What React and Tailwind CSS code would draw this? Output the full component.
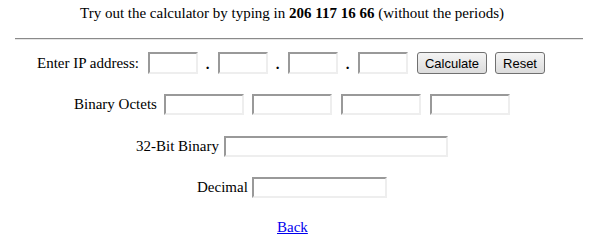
const inputCls =
  'bg-white border-2 border-t-[#999999] border-l-[#999999] border-b-[#eeeeee] border-r-[#eeeeee] outline-none';

const btnCls =
  'h-[22px] text-[13px] text-black rounded-[3px] border border-[#707070] bg-gradient-to-b from-[#f4f4f4] to-[#dcdcdc] leading-none font-["Liberation_Sans",sans-serif]';

const Dot = () => (
  <span className="w-[20px] self-end text-center font-bold text-[15px] leading-none relative -top-[2px] pr-[1px]">.</span>
);

const App = () => {
  return (
    <div className="w-[602px] h-[251px] bg-white text-black font-['Liberation_Serif',serif] text-[15px]">
      <p className="pt-[5px] pl-[80px] leading-[17px]">
        Try out the calculator by typing in <b>206 117 16 66</b> (without the periods)
      </p>

      <div className="mt-[16px] ml-[15px] mr-[19px] border-t border-[#8a8a8a] border-b border-b-[#e6e6e6]" />

      <div className="mt-[12px] ml-[37px] flex items-center h-[22px]">
        <span className="w-[111px]">Enter IP address:</span>
        <input className={`${inputCls} w-[50px] h-[22px]`} />
        <Dot />
        <input className={`${inputCls} w-[50px] h-[22px]`} />
        <Dot />
        <input className={`${inputCls} w-[50px] h-[22px]`} />
        <Dot />
        <input className={`${inputCls} w-[50px] h-[22px]`} />
        <button className={`${btnCls} ml-[9px] w-[70px]`}>Calculate</button>
        <button className={`${btnCls} ml-[8px] w-[50px]`}>Reset</button>
      </div>

      <div className="mt-[20px] ml-[74px] flex items-center h-[21px]">
        <span className="w-[90px]">Binary Octets</span>
        <input className={`${inputCls} w-[80px] h-[21px]`} />
        <input className={`${inputCls} ml-[8px] w-[80px] h-[21px]`} />
        <input className={`${inputCls} ml-[9px] w-[80px] h-[21px]`} />
        <input className={`${inputCls} ml-[9px] w-[80px] h-[21px]`} />
      </div>

      <div className="mt-[21px] ml-[136px] flex items-center h-[21px]">
        <span className="w-[88px]">32-Bit Binary</span>
        <input className={`${inputCls} w-[224px] h-[21px]`} />
      </div>

      <div className="mt-[20px] ml-[197px] flex items-center h-[21px]">
        <span className="w-[55px]">Decimal</span>
        <input className={`${inputCls} w-[135px] h-[21px]`} />
      </div>

      <div className="mt-[21px] ml-[277px] leading-[17px]">
        <a href="#" className="text-[#0000ee] underline">Back</a>
      </div>
    </div>
  );
};

export default App;
